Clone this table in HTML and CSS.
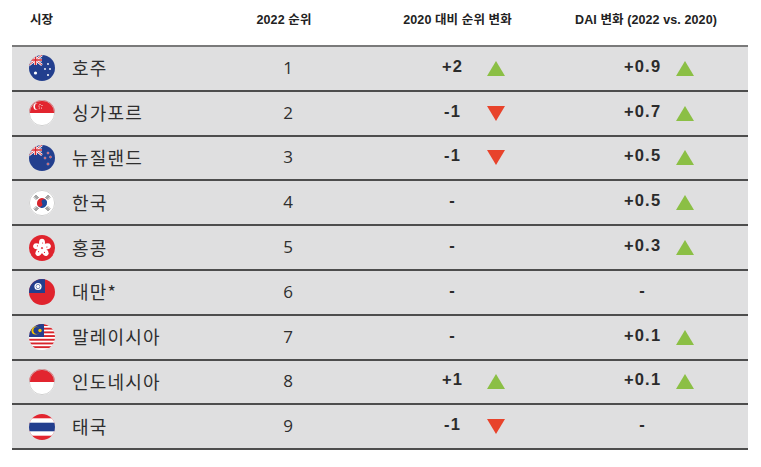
FILE: index.html
```html
<!DOCTYPE html>
<html lang="ko">
<head>
<meta charset="utf-8">
<title>DAI 순위</title>
<link rel="stylesheet" href="styles.css">
</head>
<body>
<div class="table">
  <div class="head">
    <div class="h-name">시장</div>
    <div class="h-rank">2022 순위</div>
    <div class="h-chg">2020 대비 순위 변화</div>
    <div class="h-dai">DAI 변화 (2022 vs. 2020)</div>
  </div>

  <div class="row">
    <div class="name">
      <svg class="flag" viewBox="0 0 26 26"><defs><clipPath id="c1"><circle cx="13" cy="13" r="13"/></clipPath></defs>
        <g clip-path="url(#c1)">
          <rect width="26" height="26" fill="#233f8e"/>
          <path d="M0 0 L13 10 M13 0 L0 10" stroke="#fff" stroke-width="2.4"/>
          <path d="M0 0 L13 10 M13 0 L0 10" stroke="#d8252c" stroke-width="0.9"/>
          <path d="M6.5 0 V10 M0 5 H13" stroke="#fff" stroke-width="3"/>
          <path d="M6.5 0 V10 M0 5 H13" stroke="#d8252c" stroke-width="1.6"/>
          <circle cx="6.5" cy="18" r="1.6" fill="#fff"/>
          <circle cx="19" cy="9" r="0.9" fill="#fff"/>
          <circle cx="16" cy="14" r="0.9" fill="#fff"/>
          <circle cx="21" cy="14" r="0.9" fill="#fff"/>
          <circle cx="19" cy="20" r="1" fill="#fff"/>
        </g>
      </svg>
      <span>호주</span>
    </div>
    <div class="rank">1</div>
    <div></div>
    <div class="num">+2</div>
    <div class="tri"><svg viewBox="0 0 18 15"><polygon points="9,0 18,15 0,15" class="up"/></svg></div>
    <div></div>
    <div class="num">+0.9</div>
    <div class="tri"><svg viewBox="0 0 18 15"><polygon points="9,0 18,15 0,15" class="up"/></svg></div>
  </div>

  <div class="row">
    <div class="name">
      <svg class="flag" viewBox="0 0 26 26"><defs><clipPath id="c2"><circle cx="13" cy="13" r="13"/></clipPath></defs>
        <g clip-path="url(#c2)">
          <rect width="26" height="26" fill="#ffffff"/>
          <rect width="26" height="13" fill="#e2252f"/>
          <circle cx="8" cy="6.5" r="3.6" fill="#fff"/>
          <circle cx="9.4" cy="6.5" r="3.4" fill="#e2252f"/>
          <circle cx="11" cy="4.5" r="0.6" fill="#fff"/>
          <circle cx="13" cy="5.5" r="0.6" fill="#fff"/>
          <circle cx="12.5" cy="8" r="0.6" fill="#fff"/>
          <circle cx="10.3" cy="8" r="0.6" fill="#fff"/>
          <circle cx="10" cy="6" r="0.6" fill="#fff"/>
        </g>
        <circle cx="13" cy="13" r="12.6" fill="none" stroke="#c8c8c8" stroke-width="0.8"/>
      </svg>
      <span>싱가포르</span>
    </div>
    <div class="rank">2</div>
    <div></div>
    <div class="num">-1</div>
    <div class="tri"><svg viewBox="0 0 18 15"><polygon points="0,0 18,0 9,15" class="down"/></svg></div>
    <div></div>
    <div class="num">+0.7</div>
    <div class="tri"><svg viewBox="0 0 18 15"><polygon points="9,0 18,15 0,15" class="up"/></svg></div>
  </div>

  <div class="row">
    <div class="name">
      <svg class="flag" viewBox="0 0 26 26"><defs><clipPath id="c3"><circle cx="13" cy="13" r="13"/></clipPath></defs>
        <g clip-path="url(#c3)">
          <rect width="26" height="26" fill="#233f8e"/>
          <path d="M0 0 L13 10 M13 0 L0 10" stroke="#fff" stroke-width="2.4"/>
          <path d="M0 0 L13 10 M13 0 L0 10" stroke="#d8252c" stroke-width="0.9"/>
          <path d="M6.5 0 V10 M0 5 H13" stroke="#fff" stroke-width="3"/>
          <path d="M6.5 0 V10 M0 5 H13" stroke="#d8252c" stroke-width="1.6"/>
          <circle cx="19" cy="8" r="1" fill="#d8252c" stroke="#fff" stroke-width="0.4"/>
          <circle cx="16" cy="13" r="1" fill="#d8252c" stroke="#fff" stroke-width="0.4"/>
          <circle cx="21.5" cy="12" r="1" fill="#d8252c" stroke="#fff" stroke-width="0.4"/>
          <circle cx="19" cy="19" r="1.1" fill="#d8252c" stroke="#fff" stroke-width="0.4"/>
        </g>
      </svg>
      <span>뉴질랜드</span>
    </div>
    <div class="rank">3</div>
    <div></div>
    <div class="num">-1</div>
    <div class="tri"><svg viewBox="0 0 18 15"><polygon points="0,0 18,0 9,15" class="down"/></svg></div>
    <div></div>
    <div class="num">+0.5</div>
    <div class="tri"><svg viewBox="0 0 18 15"><polygon points="9,0 18,15 0,15" class="up"/></svg></div>
  </div>

  <div class="row">
    <div class="name">
      <svg class="flag" viewBox="0 0 26 26"><defs><clipPath id="c4"><circle cx="13" cy="13" r="13"/></clipPath></defs>
        <g clip-path="url(#c4)">
          <rect width="26" height="26" fill="#fff"/>
          <g transform="rotate(-30 13 13)">
            <path d="M8 13 A5 5 0 0 1 18 13 Z" fill="#d8252c"/>
            <path d="M8 13 A5 5 0 0 0 18 13 Z" fill="#1f4a9c"/>
            <circle cx="10.5" cy="13" r="2.5" fill="#d8252c"/>
            <circle cx="15.5" cy="13" r="2.5" fill="#1f4a9c"/>
          </g>
          <g stroke="#222" stroke-width="0.8">
            <path d="M5 7.5 L7.5 5 M6 8.5 L8.5 6 M7 9.5 L9.5 7"/>
            <path d="M18.5 5 L21 7.5 M17.5 6 L20 8.5 M16.5 7 L19 9.5"/>
            <path d="M5 18.5 L7.5 21 M6 17.5 L8.5 20 M7 16.5 L9.5 19"/>
            <path d="M21 18.5 L18.5 21 M20 17.5 L17.5 20 M19 16.5 L16.5 19"/>
          </g>
        </g>
        <circle cx="13" cy="13" r="12.6" fill="none" stroke="#c8c8c8" stroke-width="0.8"/>
      </svg>
      <span>한국</span>
    </div>
    <div class="rank">4</div>
    <div></div>
    <div class="num">-</div>
    <div class="tri"></div>
    <div></div>
    <div class="num">+0.5</div>
    <div class="tri"><svg viewBox="0 0 18 15"><polygon points="9,0 18,15 0,15" class="up"/></svg></div>
  </div>

  <div class="row">
    <div class="name">
      <svg class="flag" viewBox="0 0 26 26"><defs><clipPath id="c5"><circle cx="13" cy="13" r="13"/></clipPath></defs>
        <g clip-path="url(#c5)">
          <rect width="26" height="26" fill="#e0242e"/>
          <g fill="#fff">
            <ellipse cx="13" cy="8" rx="3" ry="4.2"/>
            <ellipse cx="13" cy="8" rx="3" ry="4.2" transform="rotate(72 13 13)"/>
            <ellipse cx="13" cy="8" rx="3" ry="4.2" transform="rotate(144 13 13)"/>
            <ellipse cx="13" cy="8" rx="3" ry="4.2" transform="rotate(216 13 13)"/>
            <ellipse cx="13" cy="8" rx="3" ry="4.2" transform="rotate(288 13 13)"/>
          </g>
          <g fill="#e0242e">
            <circle cx="13.6" cy="8" r="0.6"/>
            <circle cx="13.6" cy="8" r="0.6" transform="rotate(72 13 13)"/>
            <circle cx="13.6" cy="8" r="0.6" transform="rotate(144 13 13)"/>
            <circle cx="13.6" cy="8" r="0.6" transform="rotate(216 13 13)"/>
            <circle cx="13.6" cy="8" r="0.6" transform="rotate(288 13 13)"/>
          </g>
        </g>
      </svg>
      <span>홍콩</span>
    </div>
    <div class="rank">5</div>
    <div></div>
    <div class="num">-</div>
    <div class="tri"></div>
    <div></div>
    <div class="num">+0.3</div>
    <div class="tri"><svg viewBox="0 0 18 15"><polygon points="9,0 18,15 0,15" class="up"/></svg></div>
  </div>

  <div class="row">
    <div class="name">
      <svg class="flag" viewBox="0 0 26 26"><defs><clipPath id="c6"><circle cx="13" cy="13" r="13"/></clipPath></defs>
        <g clip-path="url(#c6)">
          <rect width="26" height="26" fill="#e0242e"/>
          <rect width="16" height="14" fill="#233f8e"/>
          <circle cx="9" cy="7.5" r="3.6" fill="#fff"/>
          <circle cx="9" cy="7.5" r="2.2" fill="#233f8e"/>
          <circle cx="9" cy="7.5" r="1.8" fill="#fff"/>
        </g>
      </svg>
      <span>대만*</span>
    </div>
    <div class="rank">6</div>
    <div></div>
    <div class="num">-</div>
    <div class="tri"></div>
    <div></div>
    <div class="num">-</div>
    <div class="tri"></div>
  </div>

  <div class="row">
    <div class="name">
      <svg class="flag" viewBox="0 0 26 26"><defs><clipPath id="c7"><circle cx="13" cy="13" r="13"/></clipPath></defs>
        <g clip-path="url(#c7)">
          <rect width="26" height="26" fill="#fff"/>
          <rect y="0" width="26" height="2" fill="#d8252c"/>
          <rect y="3.7" width="26" height="1.9" fill="#d8252c"/>
          <rect y="7.4" width="26" height="1.9" fill="#d8252c"/>
          <rect y="11.1" width="26" height="1.9" fill="#d8252c"/>
          <rect y="14.8" width="26" height="1.9" fill="#d8252c"/>
          <rect y="18.5" width="26" height="1.9" fill="#d8252c"/>
          <rect y="22.2" width="26" height="1.9" fill="#d8252c"/>
          <rect width="15" height="13" fill="#233f8e"/>
          <circle cx="6.5" cy="6.5" r="4" fill="#f5c400"/>
          <circle cx="7.8" cy="6.5" r="3.4" fill="#233f8e"/>
          <circle cx="11" cy="6.5" r="1.7" fill="#f5c400"/>
        </g>
      </svg>
      <span>말레이시아</span>
    </div>
    <div class="rank">7</div>
    <div></div>
    <div class="num">-</div>
    <div class="tri"></div>
    <div></div>
    <div class="num">+0.1</div>
    <div class="tri"><svg viewBox="0 0 18 15"><polygon points="9,0 18,15 0,15" class="up"/></svg></div>
  </div>

  <div class="row">
    <div class="name">
      <svg class="flag" viewBox="0 0 26 26"><defs><clipPath id="c8"><circle cx="13" cy="13" r="13"/></clipPath></defs>
        <g clip-path="url(#c8)">
          <rect width="26" height="26" fill="#fff"/>
          <rect width="26" height="13" fill="#e2252f"/>
        </g>
        <circle cx="13" cy="13" r="12.6" fill="none" stroke="#c8c8c8" stroke-width="0.8"/>
      </svg>
      <span>인도네시아</span>
    </div>
    <div class="rank">8</div>
    <div></div>
    <div class="num">+1</div>
    <div class="tri"><svg viewBox="0 0 18 15"><polygon points="9,0 18,15 0,15" class="up"/></svg></div>
    <div></div>
    <div class="num">+0.1</div>
    <div class="tri"><svg viewBox="0 0 18 15"><polygon points="9,0 18,15 0,15" class="up"/></svg></div>
  </div>

  <div class="row">
    <div class="name">
      <svg class="flag" viewBox="0 0 26 26"><defs><clipPath id="c9"><circle cx="13" cy="13" r="13"/></clipPath></defs>
        <g clip-path="url(#c9)">
          <rect width="26" height="26" fill="#e2252f"/>
          <rect y="4.3" width="26" height="17.4" fill="#fff"/>
          <rect y="8.7" width="26" height="8.6" fill="#233f8e"/>
        </g>
      </svg>
      <span>태국</span>
    </div>
    <div class="rank">9</div>
    <div></div>
    <div class="num">-1</div>
    <div class="tri"><svg viewBox="0 0 18 15"><polygon points="0,0 18,0 9,15" class="down"/></svg></div>
    <div></div>
    <div class="num">-</div>
    <div class="tri"></div>
  </div>
</div>
</body>
</html>
```

FILE: styles.css
```css
html, body {
  margin: 0;
  padding: 0;
  background: #ffffff;
}

body {
  font-family: "Liberation Sans", "Noto Sans CJK KR", sans-serif;
  color: #2b2b2b;
}

.table {
  width: 736px;
  margin-left: 12px;
}

.head {
  display: grid;
  grid-template-columns: 226px 92px 58px 139px 29px 180px 12px;
  height: 47px;
  box-sizing: border-box;
  padding-top: 13px;
  border-bottom: 2px solid #7a7a7a;
  font-size: 12.5px;
  line-height: 14px;
  font-weight: 700;
  letter-spacing: 0.1px;
  color: #222;
}

.h-name {
  padding-left: 18px;
}

.h-rank {
  grid-column: 2;
  text-align: center;
}

.h-chg {
  grid-column: 4;
  text-align: center;
}

.h-dai {
  grid-column: 6;
  text-align: center;
}

.row {
  display: grid;
  grid-template-columns: 226px 100px 84px 60px 27px 103px 60px 26px 1fr;
  align-items: center;
  height: 44.8px;
  box-sizing: border-box;
  background: #dfdfe0;
  border-bottom: 2px solid #4d4d4d;
}

.name {
  display: flex;
  align-items: center;
  gap: 17px;
  padding-left: 17px;
}

.flag {
  width: 26px;
  height: 26px;
  display: block;
  flex: none;
}

.name span {
  font-family: "Noto Sans CJK KR", sans-serif;
  font-size: 18px;
  letter-spacing: 1.2px;
  color: #2e2e2e;
  line-height: 1;
  position: relative;
  top: -1px;
}

.rank {
  text-align: center;
  font-family: "Open Sans", "Liberation Sans", sans-serif;
  font-size: 17px;
  color: #2e2e2e;
  position: relative;
  top: -1px;
}

.num {
  text-align: center;
  font-weight: 700;
  font-size: 16.5px;
  letter-spacing: 1.2px;
  color: #2b2b2b;
  position: relative;
  top: -2px;
  left: 0.6px;
}

.tri {
  display: flex;
  justify-content: center;
  align-items: center;
}

.tri svg {
  width: 18px;
  height: 15px;
  display: block;
}

.up {
  fill: #8bbf45;
}

.down {
  fill: #e8432b;
}
```
